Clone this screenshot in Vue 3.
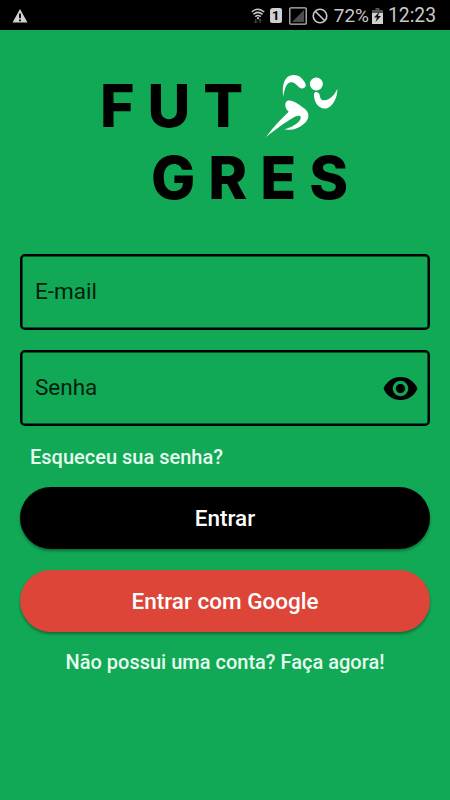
<template>
  <div class="screen">
    <header class="status-bar">
      <svg class="warning" width="16" height="14" viewBox="0 0 16 14">
        <path d="M8 0L15.5 13.5H.5z" fill="#d0d0d0" />
        <path d="M7 4.5h2v4.8H7zM7 10.4h2v1.8H7z" fill="#111" />
      </svg>

      <div class="status-right">
        <svg class="wifi" width="14" height="16" viewBox="0 0 14 16" fill="none" stroke="#c9c9c9" stroke-width="1.5">
          <path d="M.8 4Q7-1.6 13.2 4M2.4 6.4Q7 2.4 11.6 6.4M4.2 8.7Q7 6.5 9.8 8.7" />
          <circle cx="7" cy="10.2" r="1.1" fill="#c9c9c9" stroke="none" />
          <path d="M4.8 11v4M3.4 13.5l1.4 1.5 1.2-1.5M9 15v-4M7.8 12.4L9 11l1.2 1.4" stroke="#555" stroke-width="1" />
        </svg>
        <span class="sim">1</span>
        <svg class="signal" width="18" height="18" viewBox="0 0 18 18">
          <rect x=".8" y=".8" width="16.4" height="16.4" rx="1" fill="none" stroke="#bdbdbd" stroke-width="1.3" />
          <path d="M15 3v12H3z" fill="#4c4c4c" />
        </svg>
        <svg class="blocked" width="16" height="16" viewBox="0 0 16 16" fill="none" stroke="#c9c9c9" stroke-width="1.6">
          <circle cx="8" cy="8" r="6.8" />
          <path d="M3.2 3.2l9.6 9.6" />
        </svg>
        <span class="percent">72%</span>
        <svg class="battery" width="11" height="16" viewBox="0 0 11 16">
          <path d="M3.5 0h4v2H11v4H0V2h3.5z" fill="#555" />
          <path d="M0 5h11v11H0z" fill="#d0d0d0" />
          <path d="M7.5 3.5L2 9.5h3L3.5 14 9 8H6z" fill="#111" />
        </svg>
        <span class="clock">12:23</span>
      </div>
    </header>

    <main class="content">
      <div class="logo">
        <div class="logo-row">
          <span class="logo-text fut">FUT</span>
          <svg class="runner" width="90" height="80" viewBox="0 0 270 240" fill="#fff">
            <circle cx="184" cy="57" r="19.5" />
            <path d="M85 95C80 61 88 32 113 30C132 28 145 42 151 55C156 66 145 74 136 69C124 61 119 49 106 52C92 55 88 77 85 95z" />
            <path d="M181 81C190 79 195 87 195 95C196 104 204 108 214 105C231 99 239 87 247 72C248 94 236 121 218 129C203 135 186 124 180 107C177 97 175 84 181 81z" />
            <path d="M96 108C110 102 128 116 145 128C160 138 164 151 157 164C145 185 113 199 87 193C107 188 125 179 135 165C141 155 135 149 123 154C104 163 76 183 33 216C57 183 79 162 101 140C91 132 87 115 96 108z" />
          </svg>
        </div>
        <div class="logo-text gres">GRES</div>
      </div>

      <div class="field">
        <span>E-mail</span>
      </div>

      <div class="field">
        <span>Senha</span>
        <svg class="eye" width="37" height="37" viewBox="0 0 24 24">
          <path d="M12 4.5C7 4.5 2.73 7.61 1 12c1.73 4.39 6 7.5 11 7.5s9.27-3.11 11-7.5c-1.73-4.39-6-7.5-11-7.5zM12 17c-2.76 0-5-2.24-5-5s2.24-5 5-5 5 2.24 5 5-2.24 5-5 5zm0-8c-1.66 0-3 1.34-3 3s1.34 3 3 3 3-1.34 3-3-1.34-3-3-3z" />
        </svg>
      </div>

      <a class="link forgot">Esqueceu sua senha?</a>

      <button class="btn enter">Entrar</button>
      <button class="btn google">Entrar com Google</button>

      <a class="link signup">Não possui uma conta? Faça agora!</a>
    </main>
  </div>
</template>

<script setup>
</script>

<style>
body {
  margin: 0;
  background: #11a956;
}
</style>

<style scoped>
.screen {
  width: 450px;
  height: 800px;
  overflow: hidden;
  background: #11a956;
  font-family: Roboto, sans-serif;
}

.status-bar {
  height: 30px;
  box-sizing: border-box;
  padding: 1px 14px 0 12px;
  display: flex;
  align-items: center;
  justify-content: space-between;
  background: #000;
  color: #c9c9c9;
}

.status-right {
  display: flex;
  align-items: center;
}

.wifi {
  overflow: visible;
}

.sim {
  width: 12px;
  height: 15px;
  margin-left: 5px;
  border-radius: 3px 2px 2px 2px;
  background: #d0d0d0;
  color: #000;
  font-size: 13px;
  font-weight: 700;
  line-height: 15px;
  text-align: center;
}

.signal {
  margin-left: 7px;
}

.blocked {
  margin-left: 5px;
}

.percent {
  margin-left: 6px;
  font-size: 19px;
}

.battery {
  margin-left: 3px;
}

.clock {
  margin-left: 5px;
  font-size: 19.3px;
}

.content {
  display: flex;
  flex-direction: column;
  padding: 35px 20px 0;
}

.logo {
  height: 189px;
}

.logo-row {
  display: flex;
  height: 80px;
}

.logo-text {
  font-family: Inter, sans-serif;
  font-size: 59px;
  font-weight: 800;
  line-height: 82px;
  letter-spacing: 12.9px;
  color: #000;
}

.fut {
  width: 155px;
  margin-left: 80px;
  white-space: nowrap;
}

.gres {
  margin: -8px 0 0 131px;
}

.field {
  height: 76px;
  box-sizing: border-box;
  margin-bottom: 20px;
  padding: 0 9px 0 13px;
  display: flex;
  align-items: center;
  justify-content: space-between;
  border: 2px solid #000;
  border-radius: 5px;
  box-shadow: inset 0 0 0 0.5px #000;
  font-size: 22.5px;
  color: #03200f;
}

.field span {
  padding-bottom: 2px;
}

.eye {
  fill: #000;
}

.link {
  font-size: 20px;
  font-weight: 500;
  line-height: 24px;
  color: #e4fbee;
}

.forgot {
  margin: -1px 0 18px 10px;
}

.btn {
  height: 62px;
  margin: 0 0 20.5px;
  padding: 0;
  border: none;
  border-radius: 31px;
  font-family: inherit;
  font-size: 22.5px;
  font-weight: 500;
  color: #fff;
  box-shadow: 0 2px 3px rgba(0, 0, 0, 0.35);
}

.enter {
  background: #000;
}

.google {
  background: #dd4538;
}

.signup {
  margin-top: -2px;
  text-align: center;
}
</style>
